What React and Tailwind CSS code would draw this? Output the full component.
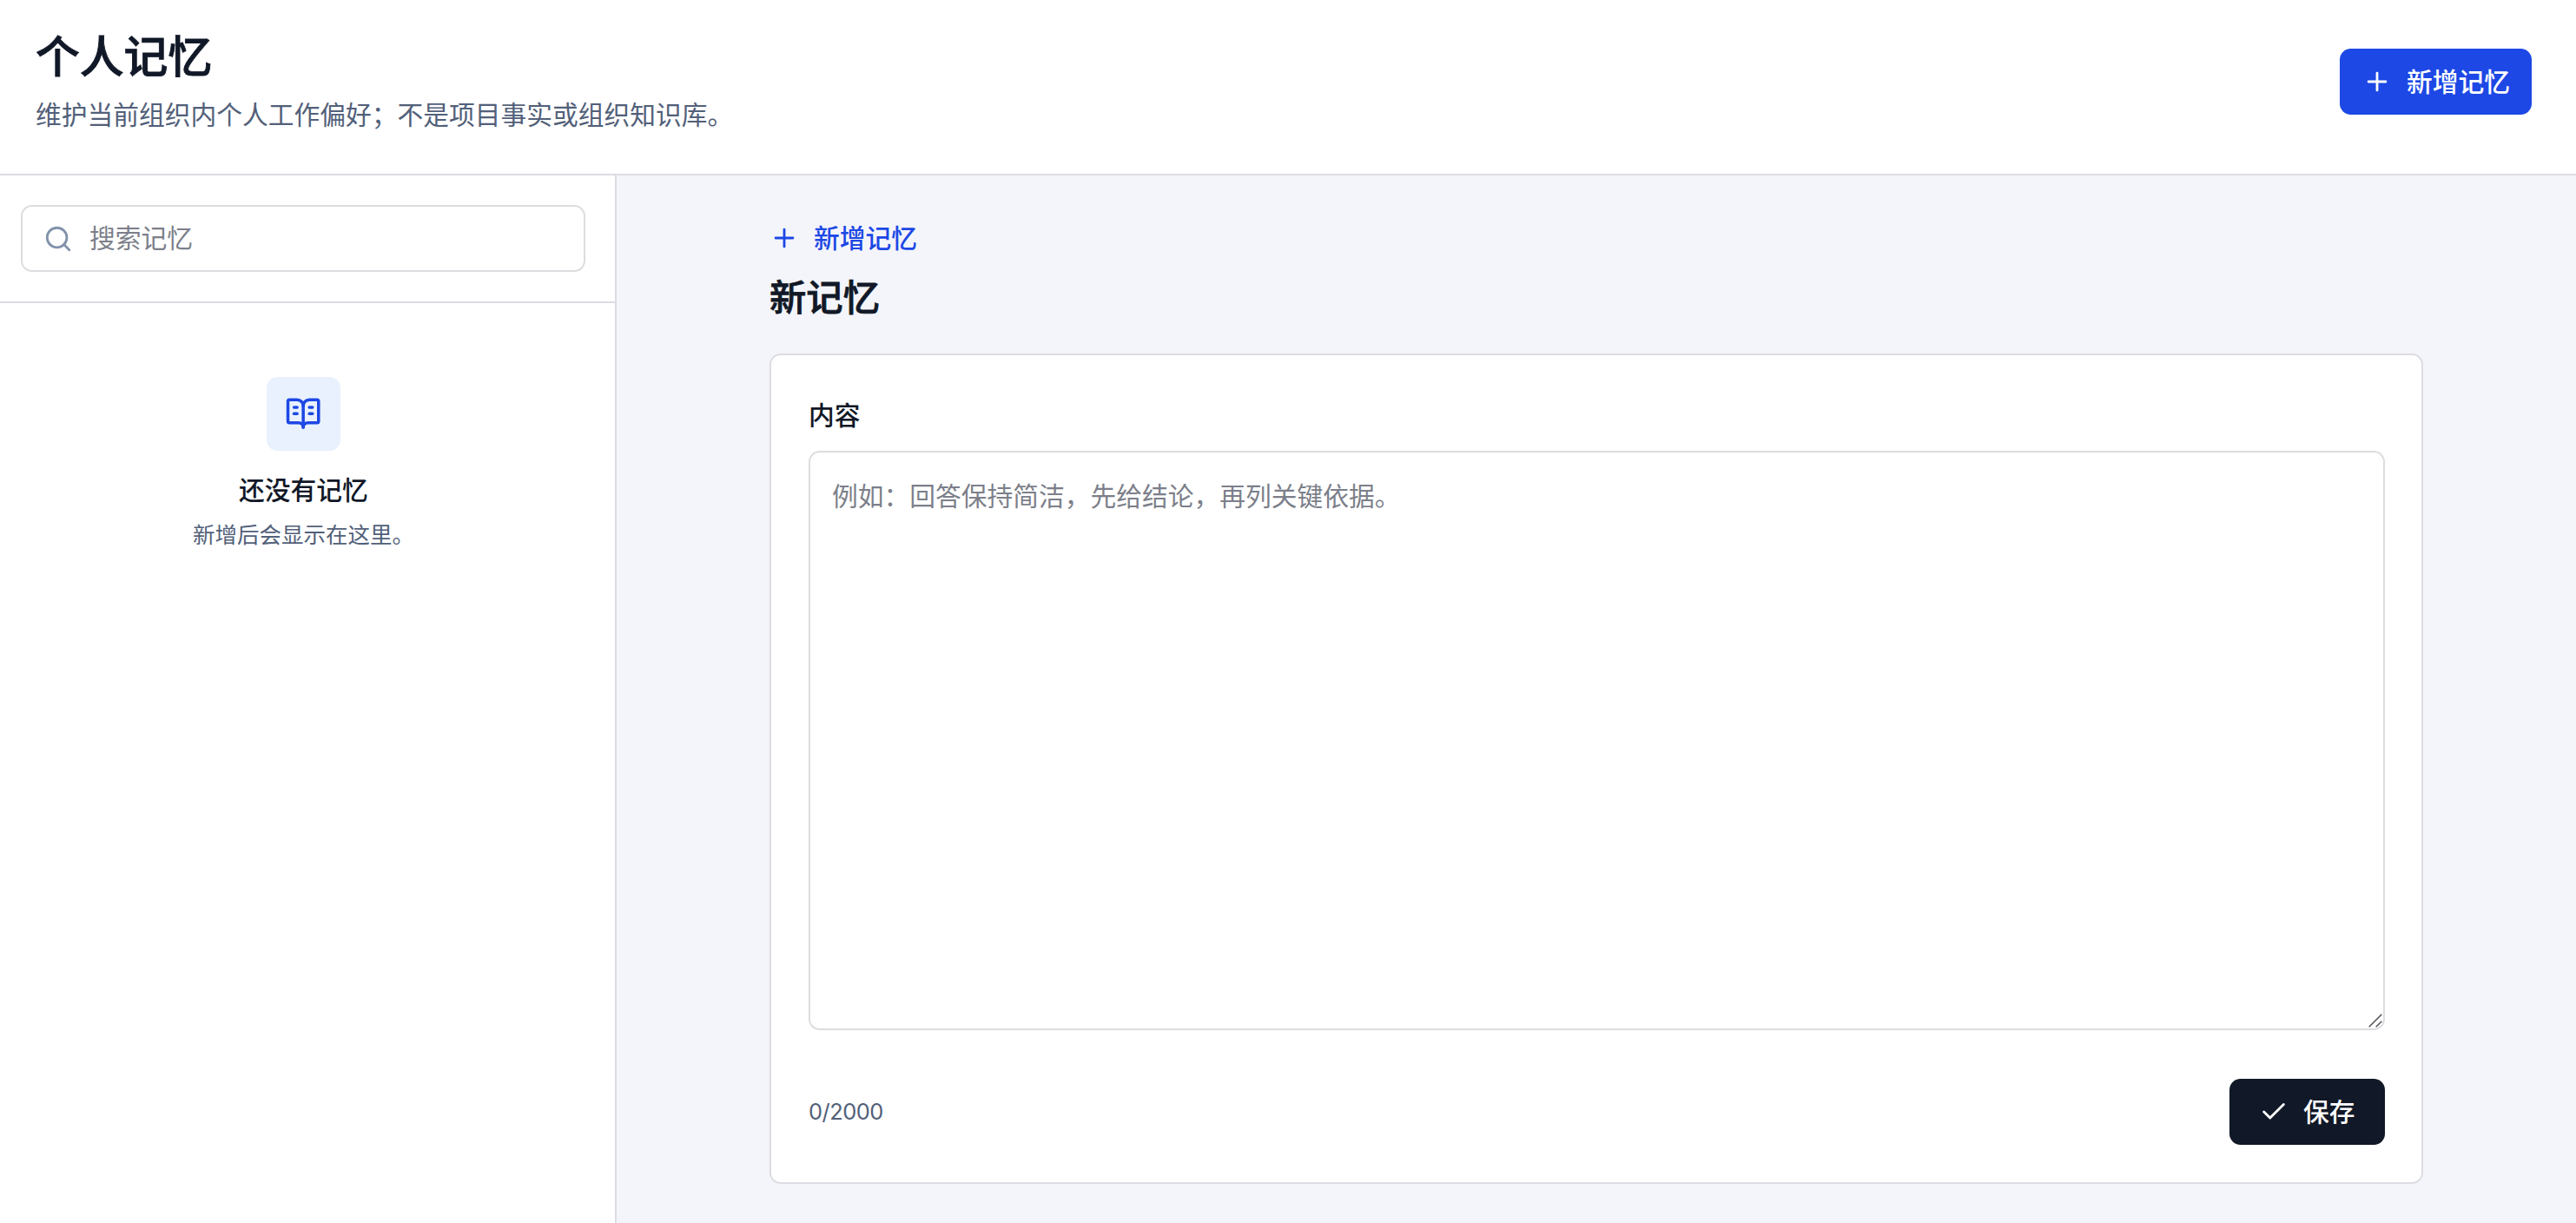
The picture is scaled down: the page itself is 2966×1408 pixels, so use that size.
import { Search, Plus, Check, BookOpenText } from "lucide-react";

export default function App() {
  return (
    <div className="flex h-[1408px] w-[2966px] flex-col overflow-hidden bg-white font-['Inter','Noto_Sans_CJK_SC',sans-serif] text-[29.75px] text-[#111827]">
      <header className="flex h-[202px] shrink-0 items-start justify-between border-b-2 border-[#dcdde3] pl-[41px] pr-[51px]">
        <div className="pt-[32px]">
          <h1 className="text-[50.8px] font-medium leading-[68px] [-webkit-text-stroke:0.9px_#111827]">个人记忆</h1>
          <p className="mt-[11px] leading-[42px] text-[#526079]">维护当前组织内个人工作偏好；不是项目事实或组织知识库。</p>
        </div>
        <button className="mt-[56px] flex h-[76px] w-[221px] items-center gap-[17px] whitespace-nowrap rounded-[12.7px] bg-[#1d48e5] pl-[26px] font-medium text-white">
          <Plus className="size-[34px] shrink-0" strokeWidth={2} />
          新增记忆
        </button>
      </header>
      <div className="flex min-h-0 flex-1">
        <aside className="w-[710px] shrink-0 border-r-2 border-[#dcdde3]">
          <div className="h-[147px] border-b-2 border-[#dcdde3] pl-[24px] pr-[34px] pt-[34px]">
            <label className="flex h-[77px] items-center gap-[19px] rounded-[12.7px] border-2 border-[#dcdde0] pl-[24px]">
              <Search className="size-[34px] shrink-0 text-[#8292ab]" strokeWidth={2} />
              <input className="min-w-0 flex-1 bg-transparent outline-none placeholder:text-[#7c7f8a]" placeholder="搜索记忆" />
            </label>
          </div>
          <div className="flex flex-col items-center pr-[9px] pt-[85px]">
            <div className="flex size-[85px] items-center justify-center rounded-[12.7px] bg-[#e9f1fe]">
              <BookOpenText className="size-[42.3px] text-[#1d48e5]" strokeWidth={2} />
            </div>
            <h2 className="mt-[24px] font-medium leading-[42px]">还没有记忆</h2>
            <p className="mt-[14px] text-[25.5px] leading-[34px] text-[#526079]">新增后会显示在这里。</p>
          </div>
        </aside>
        <main className="min-w-0 flex-1 bg-[#f4f5fa] pl-[176px] pr-[176px] pt-[51px]">
          <div className="flex h-[42px] items-center gap-[17px] font-medium text-[#1d48e5]">
            <Plus className="size-[34px] shrink-0" strokeWidth={2} />
            新增记忆
          </div>
          <h2 className="mt-[18px] text-[42.35px] font-medium leading-[60px] [-webkit-text-stroke:0.8px_#111827]">新记忆</h2>
          <section className="mt-[34px] flex h-[956px] flex-col rounded-[12.7px] border-2 border-[#dcdde3] bg-white pl-[43px] pr-[42px] pt-[48px]">
            <label className="font-medium leading-[42px]">内容</label>
            <div className="relative mt-[20px] h-[667px] shrink-0">
              <textarea
                className="block size-full resize-none rounded-[12.7px] border-2 border-[#dcdde0] px-[25px] py-[25px] leading-[51px] outline-none placeholder:text-[#7c7f8a]"
                placeholder="例如：回答保持简洁，先给结论，再列关键依据。"
              />
              <svg className="absolute bottom-[3px] right-[3px] size-[16px]" viewBox="0 0 16 16" fill="none" stroke="#55575c" strokeWidth="1.6">
                <path d="M0.7 15.3 15.3 0.7M8.7 15.3 15.3 8.7" />
              </svg>
            </div>
            <div className="mt-[56px] flex h-[76px] items-center justify-between">
              <span className="text-[25.4px] tracking-[-0.5px] text-[#526079]">0/2000</span>
              <button className="flex h-[76px] w-[179px] items-center gap-[17px] whitespace-nowrap rounded-[12.7px] bg-[#111827] pl-[34px] font-medium text-white">
                <Check className="size-[34px] shrink-0" strokeWidth={2} />
                保存
              </button>
            </div>
          </section>
        </main>
      </div>
    </div>
  );
}
